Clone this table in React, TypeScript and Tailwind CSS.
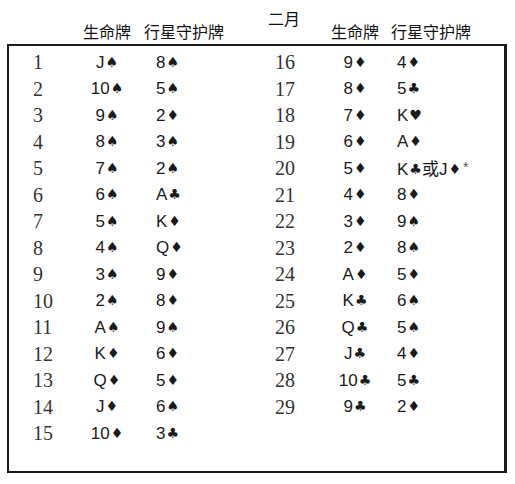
import React from "react";

const left: [string, string, string][] = [
  ["1", "J♠", "8♠"],
  ["2", "10♠", "5♠"],
  ["3", "9♠", "2♦"],
  ["4", "8♠", "3♠"],
  ["5", "7♠", "2♠"],
  ["6", "6♠", "A♣"],
  ["7", "5♠", "K♦"],
  ["8", "4♠", "Q♦"],
  ["9", "3♠", "9♦"],
  ["10", "2♠", "8♦"],
  ["11", "A♠", "9♠"],
  ["12", "K♦", "6♦"],
  ["13", "Q♦", "5♦"],
  ["14", "J♦", "6♠"],
  ["15", "10♦", "3♣"],
];

const right: [string, string, string][] = [
  ["16", "9♦", "4♦"],
  ["17", "8♦", "5♣"],
  ["18", "7♦", "K♥"],
  ["19", "6♦", "A♦"],
  ["20", "5♦", "K♣或J♦*"],
  ["21", "4♦", "8♦"],
  ["22", "3♦", "9♠"],
  ["23", "2♦", "8♠"],
  ["24", "A♦", "5♦"],
  ["25", "K♣", "6♠"],
  ["26", "Q♣", "5♠"],
  ["27", "J♣", "4♦"],
  ["28", "10♣", "5♣"],
  ["29", "9♣", "2♦"],
];

const SUITS = "♠♣♥♦";

function Card({ text }: { text: string }) {
  const parts: React.ReactNode[] = [];
  Array.from(text).forEach((ch, i) => {
    if (SUITS.includes(ch)) {
      parts.push(
        <span
          key={i}
          className="text-[14px] ml-[1px] relative top-[-1px]"
          style={{ fontFamily: '"DejaVu Sans", sans-serif' }}
        >
          {ch}
        </span>
      );
    } else if (ch === "或") {
      parts.push(
        <span key={i} style={{ fontFamily: '"Noto Sans CJK SC", sans-serif' }}>
          {ch}
        </span>
      );
    } else if (ch === "*") {
      parts.push(
        <span key={i} className="text-[14px] ml-[2px] relative top-[-3px] text-[#555]">
          {ch}
        </span>
      );
    } else {
      parts.push(<span key={i}>{ch}</span>);
    }
  });
  return <>{parts}</>;
}

function Half({
  rows,
  numW,
  gap,
}: {
  rows: [string, string, string][];
  numW: string;
  gap: string;
}) {
  return (
    <div className="w-[242px] pl-[24px] pt-[3px] flex flex-col">
      {rows.map(([n, c, g]) => (
        <div key={n} className="h-[26.5px] flex items-center">
          <div
            className={`${numW} text-[20px] leading-none text-[#333]`}
            style={{ fontFamily: '"Liberation Serif", serif' }}
          >
            {n}
          </div>
          <div
            className="w-[50px] text-center text-[17px] leading-none text-[#1a1a1a] whitespace-nowrap"
            style={{ fontFamily: '"Liberation Sans", sans-serif' }}
          >
            <Card text={c} />
          </div>
          <div
            className={`${gap} text-[17px] leading-none text-[#1a1a1a] whitespace-nowrap`}
            style={{ fontFamily: '"Liberation Sans", sans-serif' }}
          >
            <Card text={g} />
          </div>
        </div>
      ))}
    </div>
  );
}

export default function App() {
  const cjk = { fontFamily: '"Noto Sans CJK SC", sans-serif' };
  return (
    <div className="w-[515px] h-[484px] bg-white text-[#111]">
      <div className="h-[44px] px-[9px] flex text-[16px] leading-[18px]" style={cjk}>
        <div className="w-[242px] flex">
          <div className="w-[73px]" />
          <div className="w-[50px] pt-[22px] text-center">生命牌</div>
          <div className="ml-[12px] pt-[22px]">行星守护牌</div>
        </div>
        <div className="flex">
          <div className="w-[79px] pl-[17px] pt-[9px]">二月</div>
          <div className="w-[50px] pt-[22px] text-center">生命牌</div>
          <div className="ml-[11px] pt-[22px]">行星守护牌</div>
        </div>
      </div>
      <div className="ml-[7px] w-[500px] h-[429px] border-2 border-r-[3px] border-[#1c1c1c] flex">
        <Half rows={left} numW="w-[49px]" gap="ml-[24px]" />
        <Half rows={right} numW="w-[55px]" gap="ml-[17px]" />
      </div>
    </div>
  );
}
